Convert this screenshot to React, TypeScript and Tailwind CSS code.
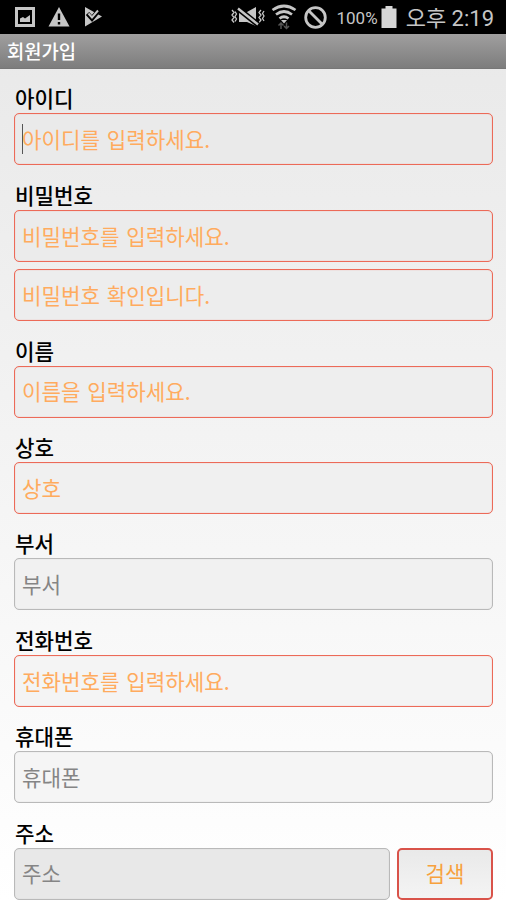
import React from 'react';

interface FieldProps {
  placeholder: string;
  required?: boolean;
  focused?: boolean;
  className?: string;
}

interface FieldGroupProps {
  label: string;
  children: React.ReactNode;
}

const Field: React.FC<FieldProps> = ({ placeholder, required, focused, className = 'w-full' }) => (
  <div
    className={`flex h-[52px] items-center rounded-[5px] border px-[7px] ${
      required
        ? 'border-[#ec6a58] text-[#ffab5e] shadow-[inset_0_0_1px_#ef8577]'
        : 'border-[#b9b9b9] text-[#858585] shadow-[inset_0_0_1px_#c4c4c4]'
    } ${className}`}
  >
    {focused && <span className="-mr-px h-[30px] w-px shrink-0 bg-[#555]" />}
    <span className="whitespace-nowrap pb-px text-[21.2px] leading-none [word-spacing:2px]">{placeholder}</span>
  </div>
);

const FieldGroup: React.FC<FieldGroupProps> = ({ label, children }) => (
  <div>
    <div className="flex h-[44.4px] items-end pb-[3px] pl-px">
      <span className="text-[21.2px] font-medium leading-[24px] text-black">{label}</span>
    </div>
    {children}
  </div>
);

const StatusBar: React.FC = () => (
  <div className="flex h-[34px] items-center justify-between bg-black pl-[14px] pr-[12px] text-[#c6c6c6]">
    <div className="flex items-center">
      {/* Gallery */}
      <svg width="22" height="22" viewBox="0 0 22 22">
        <path d="M2.500 2.500h17v17h-17z" fill="none" stroke="currentColor" strokeWidth="3" />
        <path d="M6 16v-3.500l3-1.500 2 1.500L16 9v7z" fill="currentColor" />
      </svg>
      {/* Warning */}
      <svg className="ml-[12px]" width="22" height="22" viewBox="0 0 22 22">
        <path d="M11 1 21.500 20.500H.5z" fill="currentColor" />
        <path d="M11 7.500v6.500M11 16v2.500" stroke="#000" strokeWidth="2.4" />
      </svg>
      {/* Play check */}
      <svg className="ml-[14px]" width="20" height="22" viewBox="0 0 20 22">
        <path d="M1 1 18 10.500 1 20.500z" fill="currentColor" />
        <path d="m3.500 7.500 4.500 5L15 4" fill="none" stroke="#000" strokeWidth="4.500" />
        <path d="m4.500 7.500 3.500 4 6-7" fill="none" stroke="currentColor" strokeWidth="2" />
      </svg>
    </div>

    <div className="flex items-center">
      {/* Vibrate / mute */}
      <svg width="34" height="24" viewBox="0 0 34 24" fill="none" stroke="currentColor" strokeWidth="1.6">
        <path d="m1 5 2 2.500-2 2.500 2 2.500L1 15l2 2.500M4 6.500l1.500 2.500L4 11.500 5.500 14 4 16.500M30 5l-2 2.500 2 2.500-2 2.500 2 2.500-2 2.500M33 6l-1.500 2.500L33 11l-1.500 2.500L33 16" strokeWidth="1.3" />
        <path d="M8 7h8l9-5v19l-9-4H8z" fill="currentColor" stroke="none" />
        <path d="m7 3.500 20 16" stroke="#000" strokeWidth="5.500" />
        <path d="m7 3.500 20 16" strokeWidth="2.400" />
      </svg>
      {/* Wifi */}
      <svg className="ml-[6px]" width="26" height="26" viewBox="0 0 26 26" fill="none" stroke="currentColor" strokeWidth="2.700">
        <path d="M1.500 6Q13-2 24.500 6M5 10.500q8-6 16 0M8.500 14.500q4.500-3.500 9 0" />
        <path d="m10 16 3 3.500 3-3.500z" fill="currentColor" stroke="none" />
        <path d="M10 25v-6m-2.500 2.500L10 19l2.500 2.500M15.500 18.500v6m-2.500-2.500 2.500 2.500 2.500-2.500" stroke="#555" strokeWidth="1.500" />
      </svg>
      {/* Blocked */}
      <svg className="ml-[6px]" width="25" height="25" viewBox="0 0 25 25" fill="none" stroke="currentColor" strokeWidth="2.800">
        <circle cx="12.500" cy="12.500" r="9.800" />
        <path d="m5.500 5.500 14 14" />
      </svg>
      <span className="ml-[9px] pt-[2px] font-['Roboto'] text-[17px] leading-none">100%</span>
      {/* Battery */}
      <svg className="ml-[3px]" width="16" height="22" viewBox="0 0 16 22">
        <path d="M4.500 0h7v2.500H15.500v19.500h-15V2.500h4z" fill="#d6d6d6" />
      </svg>
      <span className="ml-[9px] whitespace-nowrap pt-[4px] font-['Roboto','Noto_Sans_CJK_KR',sans-serif] text-[22px] leading-none">
        오후 2:19
      </span>
    </div>
  </div>
);

export default function App() {
  return (
    <div className="h-[900px] w-[506px] overflow-hidden bg-gradient-to-b from-[#e8e8e8] to-white font-['Noto_Sans_CJK_KR',sans-serif]">
      <StatusBar />

      <header className="flex h-[35px] items-center border-b border-[#777] bg-gradient-to-b from-[#a09f9f] to-[#7d7d7d] pl-[7px]">
        <h1 className="text-[18.8px] font-medium leading-none text-white">회원가입</h1>
      </header>

      <main className="pl-[14px] pr-[13px]">
        <FieldGroup label="아이디">
          <Field placeholder="아이디를 입력하세요." required focused className="w-full bg-[#eaeaea]" />
        </FieldGroup>

        <FieldGroup label="비밀번호">
          <div className="flex flex-col gap-[7.4px]">
            <Field placeholder="비밀번호를 입력하세요." required className="w-full bg-[#ebebeb]" />
            <Field placeholder="비밀번호 확인입니다." required className="w-full bg-[#ededed]" />
          </div>
        </FieldGroup>

        <FieldGroup label="이름">
          <Field placeholder="이름을 입력하세요." required className="w-full bg-[#eeeeee]" />
        </FieldGroup>

        <FieldGroup label="상호">
          <Field placeholder="상호" required className="w-full bg-[#f0f0f0]" />
        </FieldGroup>

        <FieldGroup label="부서">
          <Field placeholder="부서" className="w-full bg-[#f1f1f1]" />
        </FieldGroup>

        <FieldGroup label="전화번호">
          <Field placeholder="전화번호를 입력하세요." required className="w-full bg-[#f4f4f4]" />
        </FieldGroup>

        <FieldGroup label="휴대폰">
          <Field placeholder="휴대폰" className="w-full bg-[#f5f5f5]" />
        </FieldGroup>

        <FieldGroup label="주소">
          <div className="flex gap-[7px]">
            <Field placeholder="주소" className="flex-1 bg-[#e8e8e8]" />
            <button className="h-[52px] w-[96px] rounded-[5px] border-2 border-[#d9534a] bg-gradient-to-b from-[#e9e9e9] to-[#f4f4f4] pb-[2px] text-[21.2px] leading-none text-[#f7a13d]">
              검색
            </button>
          </div>
        </FieldGroup>
      </main>
    </div>
  );
}
